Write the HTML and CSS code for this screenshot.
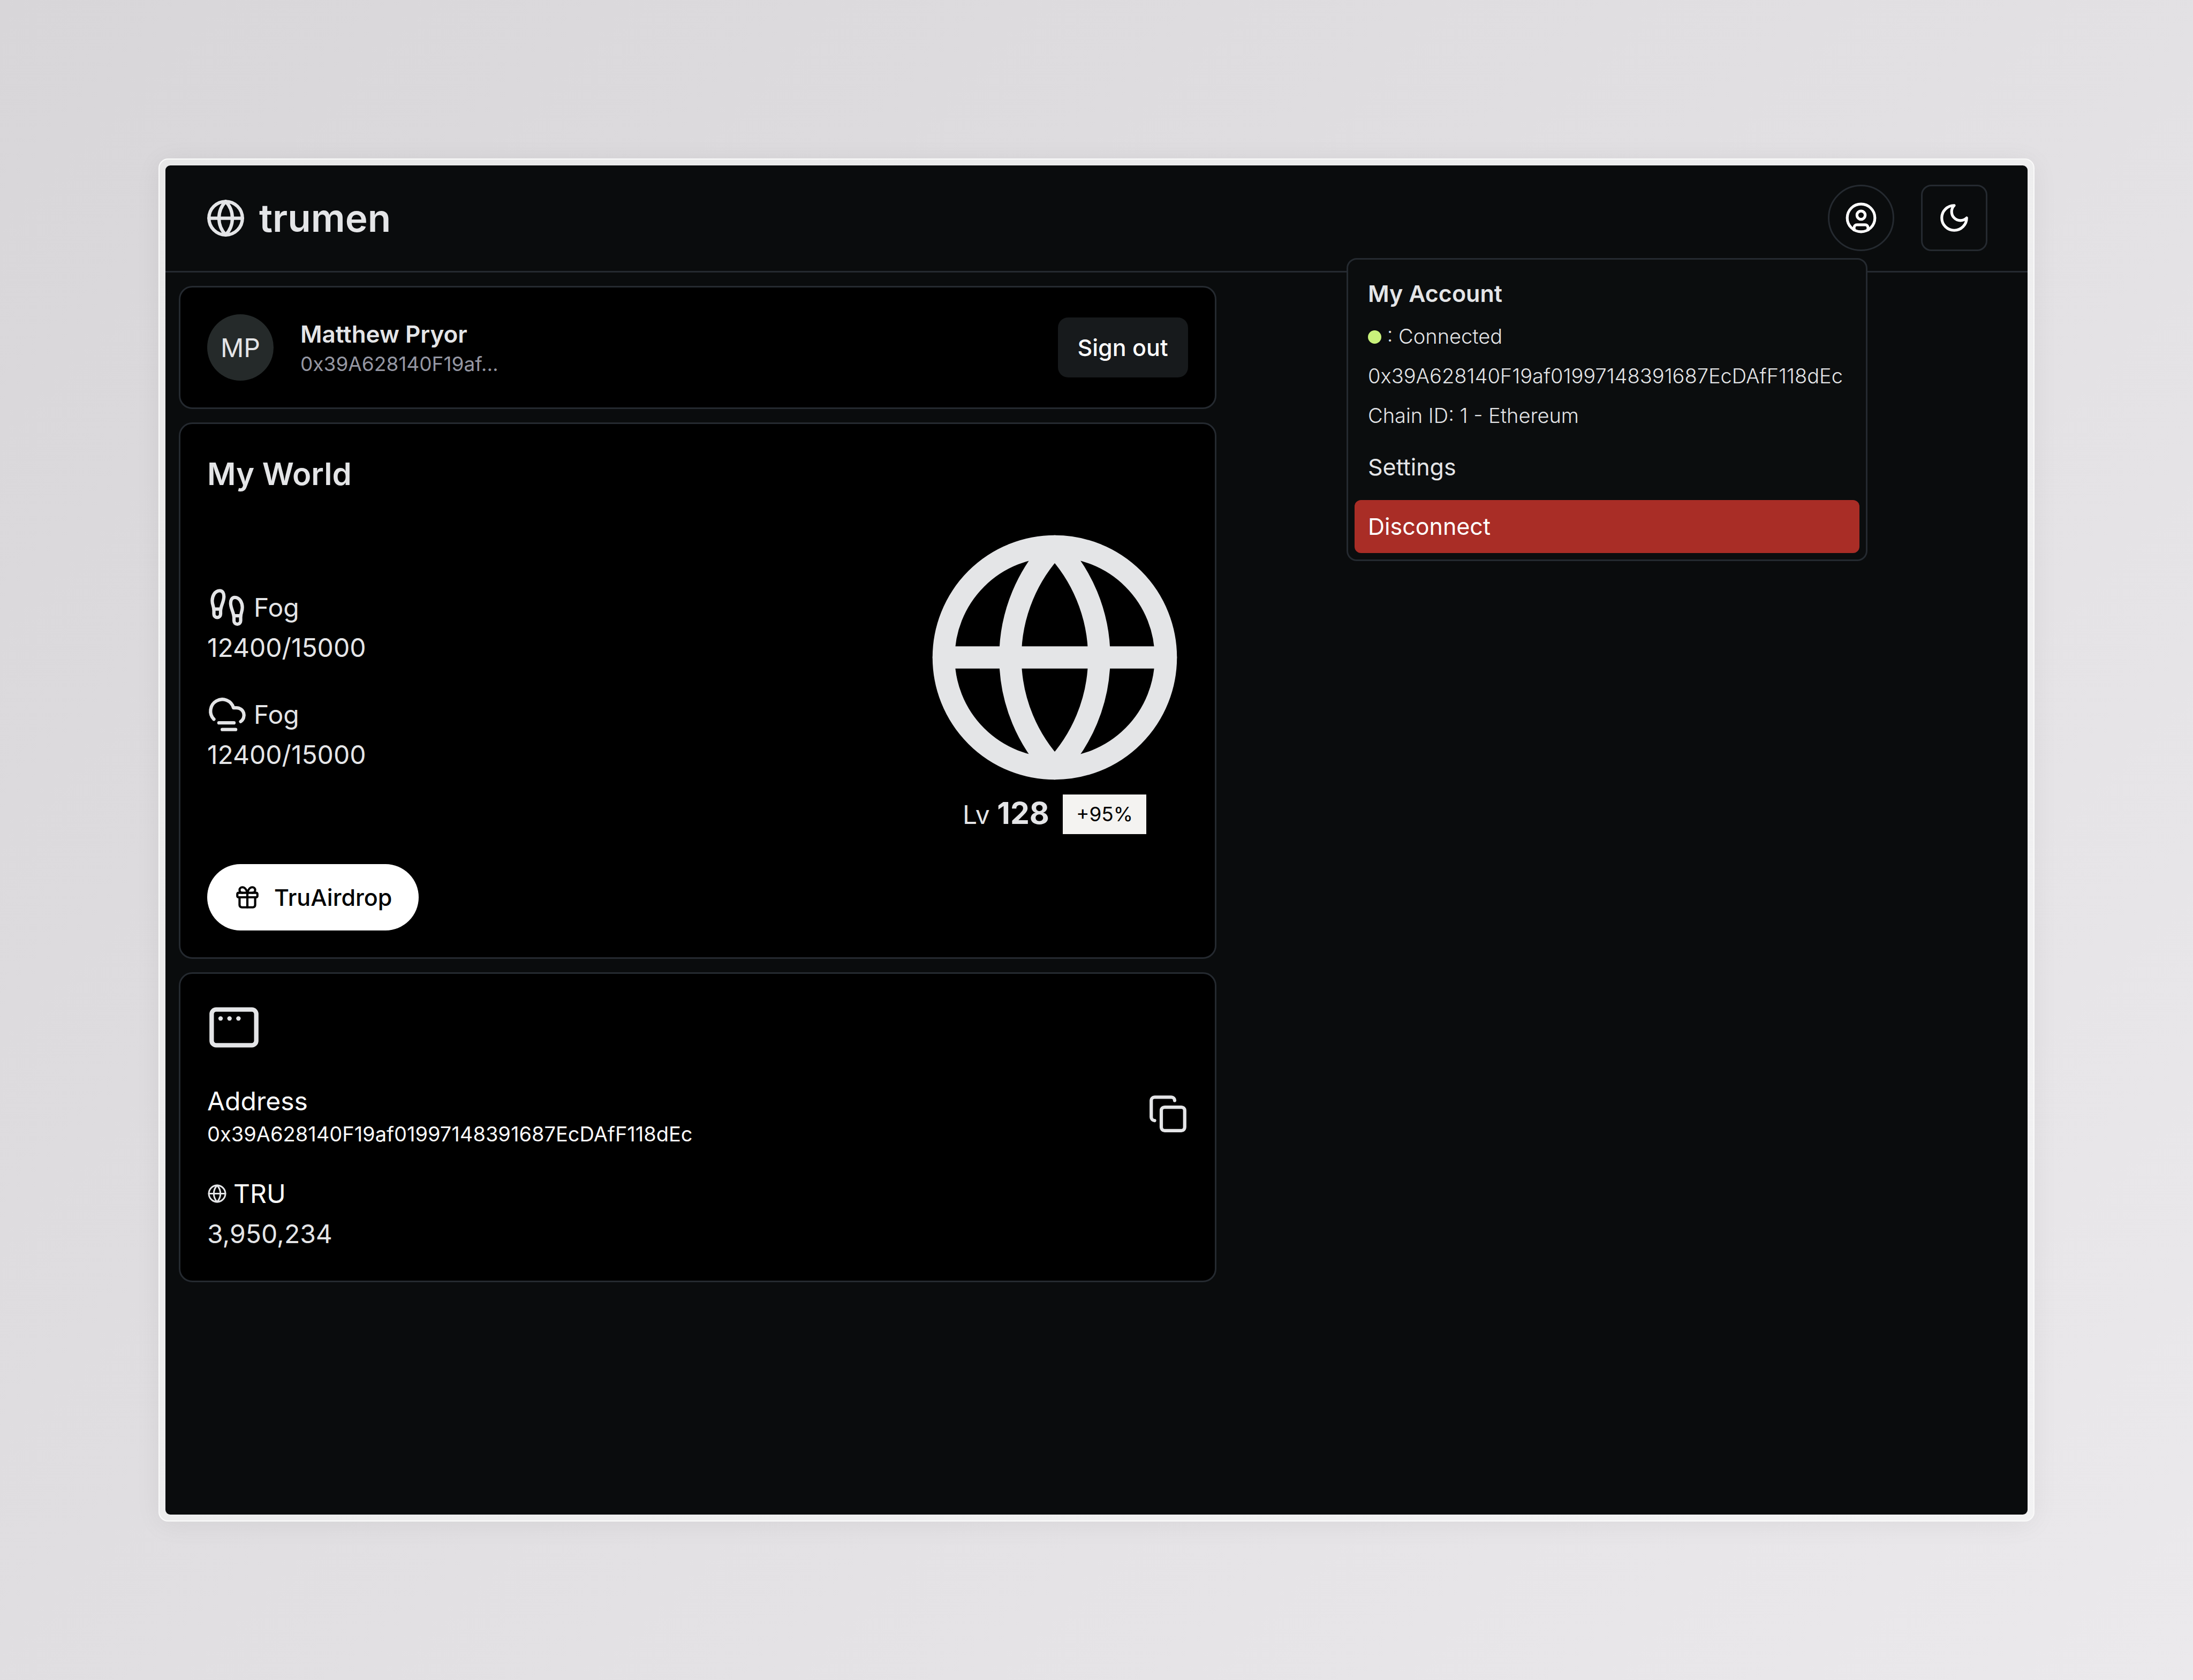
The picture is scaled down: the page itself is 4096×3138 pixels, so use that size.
FILE: index.html
```html
<!DOCTYPE html>
<html lang="en">
<head>
<meta charset="utf-8">
<title>trumen</title>
<meta name="viewport" content="width=device-width, initial-scale=1">
<link rel="stylesheet" href="styles.css">
</head>
<body>
<svg class="sprite" aria-hidden="true">
  <symbol id="globe" viewBox="0 0 24 24"><circle cx="12" cy="12" r="10"/><path d="M12 2a14.5 14.5 0 0 0 0 20 14.5 14.5 0 0 0 0-20"/><path d="M2 12h20"/></symbol>
</svg>
<div class="frame">
  <div class="app">
    <header class="topbar">
      <a class="brand" href="#"><svg class="icon icon-md"><use href="#globe"/></svg>trumen</a>
      <div class="actions">
        <button class="icon-button round" type="button" aria-label="Account" aria-expanded="true">
          <svg class="icon icon-sm" viewBox="0 0 24 24"><circle cx="12" cy="12" r="10"/><circle cx="12" cy="10" r="3"/><path d="M7 20.662V19a2 2 0 0 1 2-2h6a2 2 0 0 1 2 2v1.662"/></svg>
        </button>
        <button class="icon-button" type="button" aria-label="Toggle theme">
          <svg class="icon icon-sm" viewBox="0 0 24 24"><path d="M12 3a6 6 0 0 0 9 9 9 9 0 1 1-9-9Z"/></svg>
        </button>
        <div class="menu">
          <h2 class="menu-title">My Account</h2>
          <p class="menu-info"><span class="status-dot"></span> : Connected</p>
          <p class="menu-info">0x39A628140F19af01997148391687EcDAfF118dEc</p>
          <p class="menu-info">Chain ID: 1 - Ethereum</p>
          <div class="menu-items">
            <button class="menu-item" type="button">Settings</button>
            <button class="menu-item danger" type="button">Disconnect</button>
          </div>
        </div>
      </div>
    </header>
    <main class="content">
      <div class="cards">
        <section class="card profile">
          <span class="avatar">MP</span>
          <div class="who">
            <p class="name">Matthew Pryor</p>
            <p class="short-address">0x39A628140F19af...</p>
          </div>
          <button class="sign-out" type="button">Sign out</button>
        </section>
        <section class="card world">
          <h1 class="card-title">My World</h1>
          <div class="world-body">
            <div class="stats">
              <div class="stat">
                <p class="stat-label"><svg class="icon icon-md" viewBox="0 0 24 24"><path d="M4 16v-2.38C4 11.5 2.97 10.5 3 8c.03-2.72 1.49-6 4.5-6C9.37 2 10 3.8 10 5.5c0 3.11-2 5.66-2 8.68V16a2 2 0 1 1-4 0Z"/><path d="M20 20v-2.38c0-2.12 1.03-3.12 1-5.62-.03-2.72-1.49-6-4.5-6C14.63 6 14 7.8 14 9.5c0 3.11 2 5.66 2 8.68V20a2 2 0 1 0 4 0Z"/><path d="M16 17h4"/><path d="M4 13h4"/></svg>Fog</p>
                <p>12400/15000</p>
              </div>
              <div class="stat">
                <p class="stat-label"><svg class="icon icon-md" viewBox="0 0 24 24"><path d="M4 14.899A7 7 0 1 1 15.71 8h1.79a4.5 4.5 0 0 1 2.5 8.242"/><path d="M16 17H7"/><path d="M17 21H9"/></svg>Fog</p>
                <p>12400/15000</p>
              </div>
            </div>
            <div class="planet">
              <svg class="icon icon-xl"><use href="#globe"/></svg>
              <div class="level"><span>Lv <b class="level-value">128</b></span><span class="badge">+95%</span></div>
            </div>
          </div>
          <button class="airdrop" type="button"><svg class="icon icon-xs" viewBox="0 0 24 24"><rect x="3" y="8" width="18" height="4" rx="1"/><path d="M12 8v13"/><path d="M19 12v7a2 2 0 0 1-2 2H7a2 2 0 0 1-2-2v-7"/><path d="M7.5 8a2.5 2.5 0 0 1 0-5A4.8 8 0 0 1 12 8a4.8 8 0 0 1 4.5-5 2.5 2.5 0 0 1 0 5"/></svg>TruAirdrop</button>
        </section>
        <section class="card wallet">
          <svg class="icon icon-lg" viewBox="0 0 24 24"><rect x="2" y="4" width="20" height="16" rx="2"/><path d="M6 8h.01"/><path d="M10 8h.01"/><path d="M14 8h.01"/></svg>
          <div class="wallet-row">
            <div>
              <p class="bright">Address</p>
              <p class="address">0x39A628140F19af01997148391687EcDAfF118dEc</p>
            </div>
            <button class="copy" type="button" aria-label="Copy address"><svg class="icon icon-md" viewBox="0 0 24 24"><rect x="8" y="8" width="14" height="14" rx="2"/><path d="M4 16c-1.1 0-2-.9-2-2V4c0-1.1.9-2 2-2h10c1.1 0 2 .9 2 2"/></svg></button>
          </div>
          <div>
            <p class="stat-label"><svg class="icon icon-xxs"><use href="#globe"/></svg><span class="bright">TRU</span></p>
            <p>3,950,234</p>
          </div>
        </section>
      </div>
    </main>
  </div>
</div>
</body>
</html>
```
FILE: styles.css
```css
:root {
  --bg: #0a0c0d;
  --line: #252a30;
  --text: #e4e5e7;
  --border: 3px solid var(--line);
}

* {
  box-sizing: border-box;
  margin: 0;
}

body {
  display: flex;
  min-height: 100vh;
  padding: 296px;
  background: linear-gradient(135deg, #d8d6d9, #ebe9ec);
  color: var(--text);
  font: 400 48px/75px Inter, "Liberation Sans", sans-serif;
}

button {
  border: 0;
  background: none;
  color: inherit;
  font: inherit;
}

.sprite {
  position: absolute;
  width: 0;
  height: 0;
}

.icon {
  flex: none;
  display: block;
  fill: none;
  stroke: currentColor;
  stroke-width: 2;
  stroke-linecap: round;
  stroke-linejoin: round;
}

.icon-xxs { width: 37px; height: 37px; }
.icon-xs { width: 50px; height: 50px; }
.icon-sm { width: 62px; height: 62px; }
.icon-md { width: 75px; height: 75px; }
.icon-lg { width: 100px; height: 100px; }
.icon-xl { width: 498px; height: 498px; }

.frame {
  flex: 1;
  display: flex;
  padding: 11px;
  border: 2px solid #fafafa;
  border-radius: 18px;
  background: linear-gradient(135deg, #e8e8e8, #f3f3f4);
  box-shadow: 0 6px 50px rgb(0 0 0 / 6%);
}

.app {
  flex: 1;
  border-radius: 9px;
  background: var(--bg);
}

.topbar {
  display: flex;
  align-items: center;
  justify-content: space-between;
  padding: 36px 75px 37px;
  border-bottom: var(--border);
}

.brand {
  display: flex;
  align-items: center;
  gap: 25px;
  color: inherit;
  font-size: 71px;
  font-weight: 600;
  text-decoration: none;
}

.actions {
  position: relative;
  display: flex;
  gap: 50px;
}

.icon-button {
  display: flex;
  align-items: center;
  justify-content: center;
  width: 124px;
  height: 124px;
  padding: 0;
  border: var(--border);
  border-radius: 19px;
  color: #fff;
}

.round {
  border-radius: 50%;
}

.menu {
  position: absolute;
  top: 137px;
  right: 224px;
  min-width: 973px;
  padding: 12px;
  border: var(--border);
  border-radius: 19px;
  background: #0b0d0e;
}

.menu-title {
  padding: 20px 25px 12px;
  font-size: 43px;
  font-weight: 600;
  line-height: 62px;
}

.menu-info {
  padding: 12px 25px;
  font-size: 38px;
  font-weight: 300;
  line-height: 50px;
  white-space: nowrap;
}

.status-dot {
  display: inline-block;
  width: 25px;
  height: 25px;
  border-radius: 50%;
  background: #c9f27b;
}

.menu-items {
  display: grid;
  gap: 12px;
  margin-top: 10px;
}

.menu-item {
  padding: 18px 25px;
  border-radius: 12px;
  font-size: 43px;
  line-height: 63px;
  text-align: left;
}

.danger {
  background: #a92d26;
  color: #fff;
}

.content {
  display: grid;
  grid-template-columns: 13fr 10fr;
  padding: 25px;
}

.cards {
  display: grid;
  gap: 25px;
}

.card {
  padding: 50px;
  border: var(--border);
  border-radius: 25px;
  background: #000;
}

.profile {
  display: flex;
  align-items: center;
  gap: 50px;
}

.avatar {
  display: flex;
  align-items: center;
  justify-content: center;
  width: 124px;
  height: 124px;
  border-radius: 50%;
  background: #252a2a;
}

.who {
  flex: 1;
}

.name {
  font-size: 44px;
  font-weight: 600;
  line-height: 62px;
}

.short-address {
  color: #9597a3;
  font-size: 37px;
  line-height: 50px;
}

.sign-out {
  padding: 25px 37px;
  border-radius: 19px;
  background: #171a1c;
  color: #fff;
  font-size: 43px;
  font-weight: 500;
  line-height: 62px;
}

.world {
  display: flex;
  flex-direction: column;
  align-items: flex-start;
  gap: 50px;
}

.card-title {
  font-size: 58px;
  font-weight: 600;
  line-height: 87px;
}

.world-body {
  display: flex;
  align-items: center;
  justify-content: space-between;
  width: 100%;
}

.stats {
  display: grid;
  gap: 50px;
}

.stat-label {
  display: flex;
  align-items: center;
  gap: 12px;
}

.planet {
  display: flex;
  flex-direction: column;
  align-items: center;
}

.level {
  display: flex;
  align-items: center;
  gap: 25px;
  line-height: 84px;
}

.level-value {
  font-size: 57px;
  font-weight: 700;
}

.badge {
  padding: 12px 25px;
  background: #f4f3f1;
  color: #000;
  font-size: 37px;
  line-height: 50px;
}

.airdrop {
  display: flex;
  align-items: center;
  gap: 25px;
  padding: 31px 50px;
  border-radius: 62px;
  background: #fff;
  color: #000;
  font-size: 43px;
  font-weight: 500;
  line-height: 62px;
}

.wallet {
  display: grid;
  gap: 50px;
}

.wallet-row {
  display: flex;
  align-items: center;
  justify-content: space-between;
}

.bright {
  color: #fff;
}

.address {
  color: #fafafa;
  font-size: 38px;
  line-height: 48px;
}

.copy {
  padding: 0;
}
```
